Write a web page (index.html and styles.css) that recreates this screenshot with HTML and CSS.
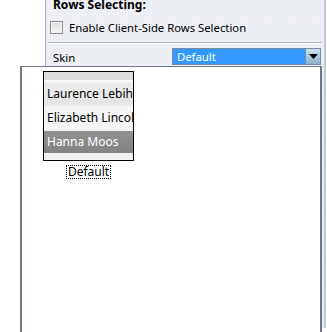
FILE: index.html
```html
<!DOCTYPE html>
<html>
<head>
<meta charset="utf-8">
<link rel="stylesheet" href="styles.css">
</head>
<body>
<div class="panel">
  <div class="title">Rows Selecting:</div>
  <label class="check-row"><span class="checkbox"></span><span>Enable Client-Side Rows Selection</span></label>
  <div class="sep"></div>
  <div class="skin-row">
    <span class="skin-label">Skin</span>
    <div class="select">
      <span class="select-value">Default</span>
      <span class="select-btn"><svg width="9" height="5" viewBox="0 0 9 5"><path d="M0 0H9L4.5 5Z" fill="#000"/></svg></span>
    </div>
  </div>
</div>
<div class="popup">
  <div class="item">
    <div class="thumb">
      <div class="thumb-head"></div>
      <div class="thumb-row r1">Laurence Lebihan</div>
      <div class="thumb-row r2">Elizabeth Lincoln</div>
      <div class="thumb-row r3">Hanna Moos</div>
    </div>
    <div class="caption">Default</div>
  </div>
</div>
</body>
</html>
```

FILE: styles.css
```css
html, body {
  margin: 0;
  padding: 0;
  background: #fff;
  overflow: hidden;
  height: 332px;
}
body {
  font-family: "Noto Sans", "Open Sans", sans-serif;
  font-size: 11.3px;
  color: #000;
}
.panel {
  margin-left: 45px;
  width: 278px;
  height: 332px;
  border-left: 1px solid #a9b1c2;
  border-right: 2px solid #c2c8d4;
  background-color: #eef0f5;
  background-image: radial-gradient(#e2e6ee 0.6px, transparent 0.7px);
  background-size: 3px 3px;
  box-sizing: content-box;
}
.title {
  font-weight: bold;
  font-size: 12px;
  padding-left: 7px;
  margin-top: -4px;
  line-height: 17px;
  height: 17px;
}
.check-row {
  display: flex;
  align-items: center;
  gap: 6px;
  padding-left: 4px;
  height: 29px;
}
.checkbox {
  width: 11px;
  height: 11px;
  border: 1px solid #8e8f8f;
  background: linear-gradient(#dcdcdc, #f6f6f6);
  box-shadow: inset 0 0 0 1px #f4f4f4;
}
.sep {
  margin: 0 2px;
  border-top: 1px solid #b0b6c2;
  border-bottom: 1px solid #fff;
}
.skin-row {
  display: flex;
  align-items: center;
  justify-content: space-between;
  padding: 4px 3px 0 7px;
}
.skin-label {
  margin-top: 2px;
}
.select {
  display: flex;
  width: 149px;
  height: 17px;
  border: 1px solid #7b8ba3;
  background: #3399ff;
  box-sizing: border-box;
}
.select-value {
  flex: 1;
  color: #fff;
  padding-left: 4px;
  line-height: 15px;
}
.select-btn {
  width: 15px;
  height: 15px;
  background: linear-gradient(#cfe0ee, #8db3cf);
  border-left: 1px solid #6d8cab;
  display: flex;
  align-items: center;
  justify-content: center;
  box-sizing: border-box;
}
.popup {
  position: absolute;
  left: 20px;
  top: 66px;
  width: 302px;
  height: 280px;
  background: #fff;
  border: 2px solid #6e7888;
  border-top-width: 1px;
  box-sizing: border-box;
  padding: 4px 0 0 21px;
}
.item {
  display: flex;
  flex-direction: column;
  align-items: center;
  width: 91px;
}
.thumb {
  width: 91px;
  height: 90px;
  border: 1px solid #000;
  box-sizing: border-box;
  overflow: hidden;
  background: #f0f0f0;
  white-space: nowrap;
  font-size: 12px;
}
.thumb-head {
  height: 8px;
  background: #dcdcdc;
  border-bottom: 2px solid #fafafa;
  margin-bottom: 1px;
}
.thumb-row {
  height: 22px;
  line-height: 22px;
  padding-left: 3px;
  margin-bottom: 2px;
}
.r1 { background: linear-gradient(#ececec, #e4e4e4); }
.r2 { background: #f5f5f5; }
.r3 { background: linear-gradient(#919191, #828282); color: #fff; }
.caption {
  margin-top: 4px;
  border: 1px dotted #000;
  padding: 0 1px;
  line-height: 12px;
  font-size: 12px;
}
```
